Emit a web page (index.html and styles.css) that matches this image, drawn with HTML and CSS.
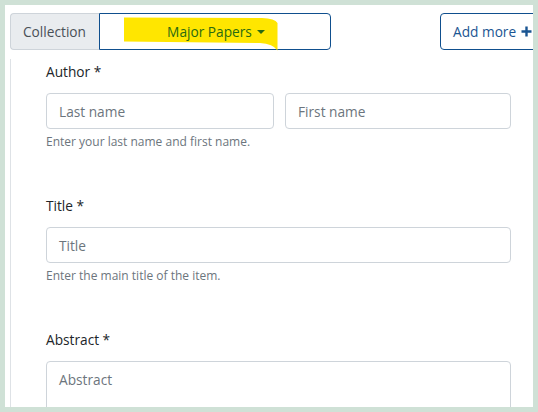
FILE: index.html
```html
<!DOCTYPE html>
<html lang="en">
<head>
<meta charset="utf-8">
<title>Submit item</title>
<link rel="stylesheet" href="styles.css">
</head>
<body>
<div class="frame">
  <div class="topbar">
    <div class="collection-group">
      <span class="addon">Collection</span>
      <button class="select" type="button">
        <svg class="highlight" width="154" height="34" viewBox="0 0 154 34" aria-hidden="true">
          <path d="M0,0.5 L138,1 Q151,1.5 153.5,6 L153.5,33.5 Q149,26.5 136,26 L0,24.5 Z" fill="#ffe600"/>
        </svg>
        <span class="select-text">Major Papers<span class="caret"></span></span>
      </button>
    </div>
    <button class="add" type="button">Add more <svg class="plus" width="11" height="11" viewBox="0 0 11 11" aria-hidden="true"><path d="M5.5 0.5V10.5M0.5 5.5H10.5" stroke="#1a5592" stroke-width="2.4"/></svg></button>
  </div>
  <div class="card">
    <div class="field">
      <label class="label">Author *</label>
      <div class="row">
        <div class="input">Last name</div>
        <div class="input">First name</div>
      </div>
      <div class="help">Enter your last name and first name.</div>
    </div>
    <div class="field">
      <label class="label">Title *</label>
      <div class="input">Title</div>
      <div class="help">Enter the main title of the item.</div>
    </div>
    <div class="field">
      <label class="label">Abstract *</label>
      <div class="input textarea">Abstract</div>
    </div>
  </div>
</div>
</body>
</html>
```

FILE: styles.css
```css
* { box-sizing: border-box; }
html, body { margin: 0; padding: 0; }
body {
  background: #cfe1d6;
  font-family: "Open Sans", "Noto Sans", sans-serif;
  font-size: 13.7px;
  color: #212529;
}
.frame {
  margin: 5px;
  width: 528px;
  height: 402px;
  background: #fff;
  overflow: hidden;
}
.topbar {
  display: flex;
  padding: 8px 0 0 5px;
  width: 640px;
}
.collection-group {
  display: flex;
  height: 37px;
}
.addon {
  display: flex;
  align-items: center;
  width: 89px;
  padding-left: 12px;
  background: #e9ecef;
  border: 1px solid #ced4da;
  border-right: none;
  border-radius: 4px 0 0 4px;
  color: #495057;
  font-size: 13.7px;
}
.select {
  position: relative;
  width: 232px;
  height: 37px;
  padding: 0;
  background: #fff;
  border: 1px solid #0f4f8e;
  border-radius: 0 4px 4px 0;
  font-family: inherit;
  font-size: 13.7px;
  display: flex;
  align-items: center;
  justify-content: center;
}
.highlight {
  position: absolute;
  left: 24px;
  top: 3px;
}
.select-text {
  position: relative;
  color: #2a6a12;
  padding-left: 2px;
}
.caret {
  display: inline-block;
  margin-left: 5px;
  vertical-align: 3px;
  border-top: 4px solid #2a6a12;
  border-left: 4px solid transparent;
  border-right: 4px solid transparent;
}
.add {
  margin-left: 109px;
  width: 120px;
  height: 37px;
  padding: 0 0 0 12px;
  text-align: left;
  background: #fff;
  border: 1px solid #0f4f8e;
  border-radius: 4px;
  color: #1a5592;
  font-family: inherit;
  font-size: 13.7px;
  display: flex;
  align-items: center;
}
.plus { margin-left: 5px; }
.card {
  margin: 9px 0 0 5px;
  border-left: 1px solid #dee2e6;
  padding: 3px 22px 0 35px;
}
.field { margin-bottom: 45px; }
.label {
  display: block;
  line-height: 20px;
  font-size: 13.7px;
  margin-bottom: 11px;
}
.row {
  display: grid;
  grid-template-columns: 228px 226px;
  column-gap: 11px;
}
.input {
  height: 36px;
  display: flex;
  align-items: center;
  padding-left: 12px;
  border: 1px solid #ced4da;
  border-radius: 4px;
  color: #6c757d;
  font-size: 13.7px;
}
.textarea {
  height: 80px;
  align-items: flex-start;
  padding-top: 8px;
}
.help {
  margin-top: 4px;
  line-height: 18px;
  font-size: 12px;
  color: #6c757d;
}
```
